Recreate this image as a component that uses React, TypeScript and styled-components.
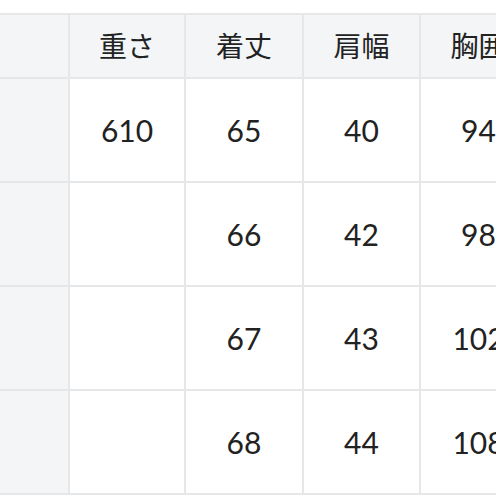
import React from "react";
import styled, { createGlobalStyle } from "styled-components";

const Global = createGlobalStyle`
  html, body {
    margin: 0;
    padding: 0;
    background: #ffffff;
    overflow: hidden;
  }
  body {
    font-family: Lato, "Noto Sans CJK JP", sans-serif;
    color: #222222;
  }
`;

const Page = styled.div`
  width: 496px;
  height: 496px;
  overflow: hidden;
  padding-top: 13px;
  box-sizing: border-box;
`;

const Table = styled.table`
  border-collapse: collapse;
  table-layout: fixed;
  width: 700px;
  margin-left: -2px;
`;

const Col = styled.col<{ $w?: number }>`
  width: ${(p) => (p.$w ? `${p.$w}px` : "auto")};
`;

const Cell = styled.td<{ $head?: boolean; $side?: boolean }>`
  border: 2px solid #e6e7e8;
  background: ${(p) => (p.$head || p.$side ? "#f3f5f7" : "#ffffff")};
  height: ${(p) => (p.$head ? "64px" : "104px")};
  padding: 0;
  text-align: center;
  vertical-align: middle;
  font-family: Lato, "Noto Sans CJK JP", sans-serif;
  font-size: ${(p) => (p.$head ? "28px" : "30px")};
  font-weight: 400;
  color: #222222;
  line-height: 1;
  box-sizing: border-box;
`;

const headers = ["", "重さ", "着丈", "肩幅", "胸囲", ""];
const rows = [
  ["", "610", "65", "40", "94", ""],
  ["", "", "66", "42", "98", ""],
  ["", "", "67", "43", "102", ""],
  ["", "", "68", "44", "108", ""],
];
const widths = [70, 116, 118, 117, 117, 0];

export default function App() {
  return (
    <Page>
      <Global />
      <Table>
        <colgroup>
          {widths.map((w, i) => (
            <Col key={i} $w={w} />
          ))}
        </colgroup>
        <tbody>
          <tr>
            {headers.map((h, i) => (
              <Cell key={i} $head>
                {h}
              </Cell>
            ))}
          </tr>
          {rows.map((r, ri) => (
            <tr key={ri}>
              {r.map((v, ci) => (
                <Cell key={ci} $side={ci === 0}>
                  {v}
                </Cell>
              ))}
            </tr>
          ))}
        </tbody>
      </Table>
    </Page>
  );
}
